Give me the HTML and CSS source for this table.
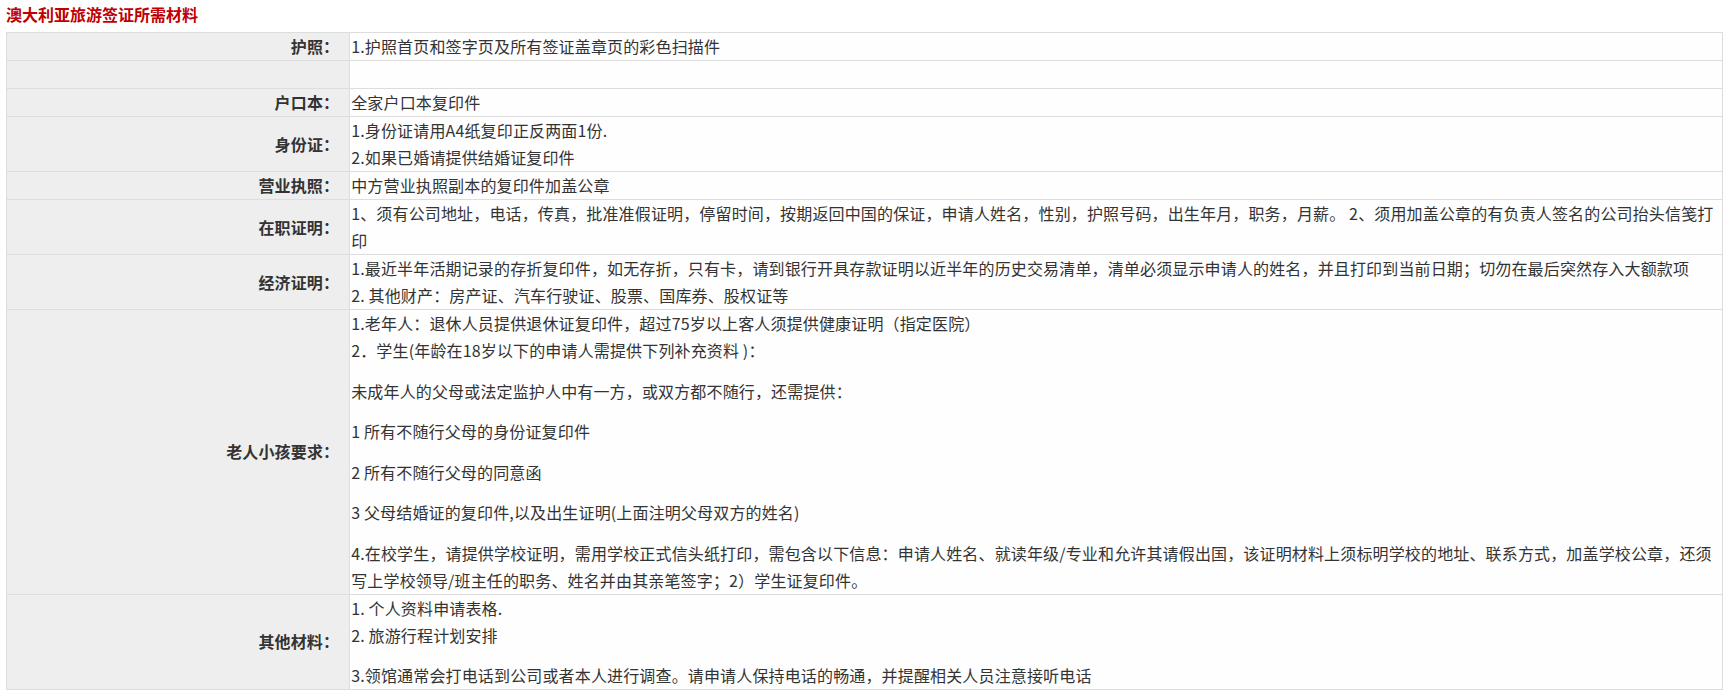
FILE: index.html
```html
<!DOCTYPE html>
<html lang="zh-CN">
<head>
<meta charset="utf-8">
<title>澳大利亚旅游签证所需材料</title>
<link rel="stylesheet" href="styles.css">
</head>
<body>
<div class="page">
  <h2 class="title">澳大利亚旅游签证所需材料</h2>
  <table class="visa">
    <tbody>
      <tr>
        <th class="label">护照：</th>
        <td class="content">1.护照首页和签字页及所有签证盖章页的彩色扫描件</td>
      </tr>
      <tr>
        <th class="label"></th>
        <td class="content"></td>
      </tr>
      <tr>
        <th class="label">户口本：</th>
        <td class="content">全家户口本复印件</td>
      </tr>
      <tr>
        <th class="label">身份证：</th>
        <td class="content">1.身份证请用A4纸复印正反两面1份.<br>2.如果已婚请提供结婚证复印件</td>
      </tr>
      <tr>
        <th class="label">营业执照：</th>
        <td class="content">中方营业执照副本的复印件加盖公章</td>
      </tr>
      <tr>
        <th class="label">在职证明：</th>
        <td class="content">1、须有公司地址，电话，传真，批准准假证明，停留时间，按期返回中国的保证，申请人姓名，性别，护照号码，出生年月，职务，月薪。 2、须用加盖公章的有负责人签名的公司抬头信笺打印</td>
      </tr>
      <tr>
        <th class="label">经济证明：</th>
        <td class="content">1.最近半年活期记录的存折复印件，如无存折，只有卡，请到银行开具存款证明以近半年的历史交易清单，清单必须显示申请人的姓名，并且打印到当前日期；切勿在最后突然存入大额款项<br>2. 其他财产：房产证、汽车行驶证、股票、国库券、股权证等</td>
      </tr>
      <tr>
        <th class="label">老人小孩要求：</th>
        <td class="content">1.老年人：退休人员提供退休证复印件，超过75岁以上客人须提供健康证明（指定医院）<br>2．学生(年龄在18岁以下的申请人需提供下列补充资料 )：
          <p class="para">未成年人的父母或法定监护人中有一方，或双方都不随行，还需提供：</p>
          <p class="para">1 所有不随行父母的身份证复印件</p>
          <p class="para">2 所有不随行父母的同意函</p>
          <p class="para">3 父母结婚证的复印件,以及出生证明(上面注明父母双方的姓名)</p>
          <p class="para">4.在校学生，请提供学校证明，需用学校正式信头纸打印，需包含以下信息：申请人姓名、就读年级/专业和允许其请假出国，该证明材料上须标明学校的地址、联系方式，加盖学校公章，还须写上学校领导/班主任的职务、姓名并由其亲笔签字；2）学生证复印件。</p>
        </td>
      </tr>
      <tr>
        <th class="label">其他材料：</th>
        <td class="content">1. 个人资料申请表格.<br>2. 旅游行程计划安排
          <p class="para para-tight">3.领馆通常会打电话到公司或者本人进行调查。请申请人保持电话的畅通，并提醒相关人员注意接听电话</p>
        </td>
      </tr>
    </tbody>
  </table>
</div>
</body>
</html>
```

FILE: styles.css
```css
html, body {
  margin: 0;
  padding: 0;
  background: #ffffff;
}

body {
  font-family: "Noto Sans CJK SC", "Noto Sans", sans-serif;
  color: #333333;
}

.page {
  width: 1717px;
  padding: 0 0 0 6px;
}

.title {
  margin: 0 0 5px 0;
  padding-top: 1px;
  font-size: 16px;
  line-height: 26px;
  font-weight: bold;
  color: #c00000;
}

.visa {
  width: 1717px;
  border-collapse: collapse;
  border: 1px solid #dddddd;
  font-size: 16px;
  line-height: 27px;
  letter-spacing: 0.15px;
}

.visa th,
.visa td {
  border: 1px solid #dddddd;
  padding: 0;
}

.label {
  width: 20%;
  background: #eeeeee;
  text-align: right;
  vertical-align: middle;
  font-weight: bold;
  color: #333333;
  padding-right: 10px !important;
  height: 27px;
}

.content {
  background: #fefefe;
  text-align: left;
  vertical-align: top;
  padding-left: 1px !important;
  color: #333333;
}

.para {
  margin: 13.6px 0 0 0;
}

.para-tight {
  margin-top: 13px;
}
```
